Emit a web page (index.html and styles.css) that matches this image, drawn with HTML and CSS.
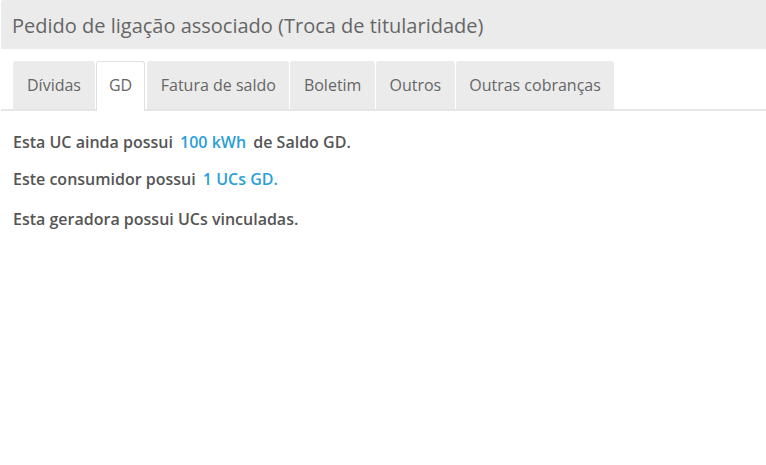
FILE: index.html
```html
<!DOCTYPE html>
<html lang="pt">
<head>
<meta charset="utf-8">
<link rel="stylesheet" href="styles.css">
</head>
<body>
<div class="panel">
  <div class="panel-heading">Pedido de ligação associado (Troca de titularidade)</div>
  <div class="panel-body">
    <ul class="tabs">
      <li class="tab">Dívidas</li>
      <li class="tab active">GD</li>
      <li class="tab">Fatura de saldo</li>
      <li class="tab">Boletim</li>
      <li class="tab">Outros</li>
      <li class="tab">Outras cobranças</li>
    </ul>
    <div class="content">
      <p class="line l1">Esta UC ainda possui <span class="hl">100 kWh</span> de Saldo GD.</p>
      <p class="line l2">Este consumidor possui <span class="hl">1 UCs GD.</span></p>
      <p class="line l3">Esta geradora possui UCs vinculadas.</p>
    </div>
  </div>
</div>
</body>
</html>
```
FILE: styles.css
```css
* { box-sizing: border-box; }
html, body { margin: 0; padding: 0; background: #fff; }
body { font-family: "Open Sans", "Noto Sans", sans-serif; color: #555; }
.panel { margin-left: 1px; }
.panel-heading {
  background: #ebebeb;
  height: 49px;
  padding: 3px 11px 0;
  font-size: 20px;
  line-height: 46px;
  color: #666;
  border-top-left-radius: 3px;
}
.panel-body { padding: 12px 0 0 0; }
.tabs {
  list-style: none;
  margin: 0;
  padding: 0 0 0 12px;
  display: flex;
  border-bottom: 2px solid #e6e6e6;
  height: 50px;
}
.tab {
  background: #ebebeb;
  height: 48px;
  line-height: 48px;
  padding: 0 13.5px;
  font-size: 16px;
  color: #666;
  margin-right: 1px;
  border-radius: 3px 3px 0 0;
}
.tab:first-child { padding: 0 14px; }
.tab.active {
  background: #fff;
  border: 1px solid #e0e0e0;
  border-bottom: none;
  height: 50px;
  line-height: 47px;
  padding: 0 12px;
  margin-right: 2px;
}
.content { padding: 21px 0 0 12px; }
.line {
  margin: 0;
  font-size: 16px;
  font-weight: 600;
  color: #555;
  line-height: 20px;
}
.l2 { margin-top: 17px; }
.l3 { margin-top: 20px; }
.hl { color: #2a9fd8; margin: 0 3px; }
```
